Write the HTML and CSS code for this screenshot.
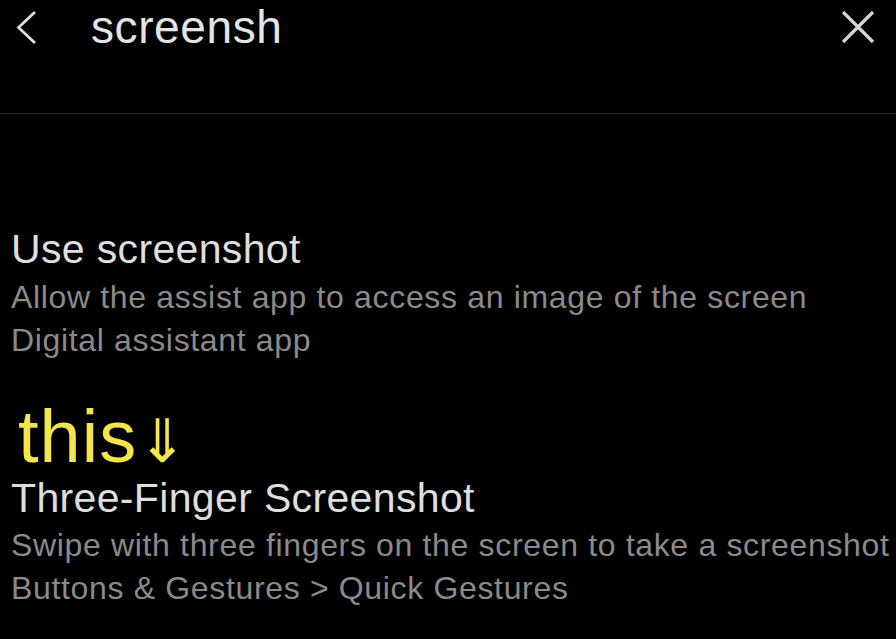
FILE: index.html
```html
<!DOCTYPE html>
<html>
<head>
<meta charset="utf-8">
<link rel="stylesheet" href="styles.css">
</head>
<body>
<header class="search-bar">
  <svg class="back" width="24" height="36" viewBox="0 0 24 36"><polyline points="20,2 3.5,17.5 20,33" fill="none" stroke="#dedede" stroke-width="2.8"/></svg>
  <div class="query">screensh</div>
  <svg class="close" width="34" height="34" viewBox="0 0 34 34"><path d="M2 2 L32 32 M32 2 L2 32" fill="none" stroke="#d6d6d6" stroke-width="3.2"/></svg>
</header>
<main class="results">
  <section class="item">
    <div class="title">Use screenshot</div>
    <div class="sub first">Allow the assist app to access an image of the screen</div>
    <div class="sub">Digital assistant app</div>
  </section>
  <div class="note">this<span class="arrow">⇓</span></div>
  <section class="item">
    <div class="title">Three-Finger Screenshot</div>
    <div class="sub first">Swipe with three fingers on the screen to take a screenshot</div>
    <div class="sub">Buttons &amp; Gestures &gt; Quick Gestures</div>
  </section>
</main>
</body>
</html>
```
FILE: styles.css
```css
html, body {
  margin: 0;
  padding: 0;
  background: #000;
  font-family: "Liberation Sans", Arial, sans-serif;
  overflow: hidden;
}
.search-bar {
  height: 114px;
  border-bottom: 1px solid #2a2a2a;
  box-sizing: border-box;
  display: flex;
  align-items: flex-start;
}
.back {
  margin-left: 15px;
  margin-top: 10px;
}
.query {
  margin-left: 52px;
  font-size: 46px;
  line-height: 54px;
  letter-spacing: 0.6px;
  color: #e4e4e4;
  flex: 1;
}
.close {
  margin-top: 10px;
  margin-right: 21px;
}
.results {
  padding-top: 111px;
  padding-left: 11px;
}
.title {
  font-size: 41px;
  line-height: 48px;
  letter-spacing: 0.35px;
  color: #dedede;
}
.sub {
  font-size: 32px;
  line-height: 43px;
  letter-spacing: 0.66px;
  color: #8a8a8a;
  white-space: nowrap;
}
.sub.first {
  margin-top: 2.5px;
}
.note {
  margin-top: 38px;
  margin-left: 7px;
  font-size: 74px;
  line-height: 74px;
  letter-spacing: 1px;
  color: #f2e64a;
}
.arrow {
  font-family: "DejaVu Sans", sans-serif;
  font-size: 60px;
  line-height: 0;
  margin-left: 0;
}
```
